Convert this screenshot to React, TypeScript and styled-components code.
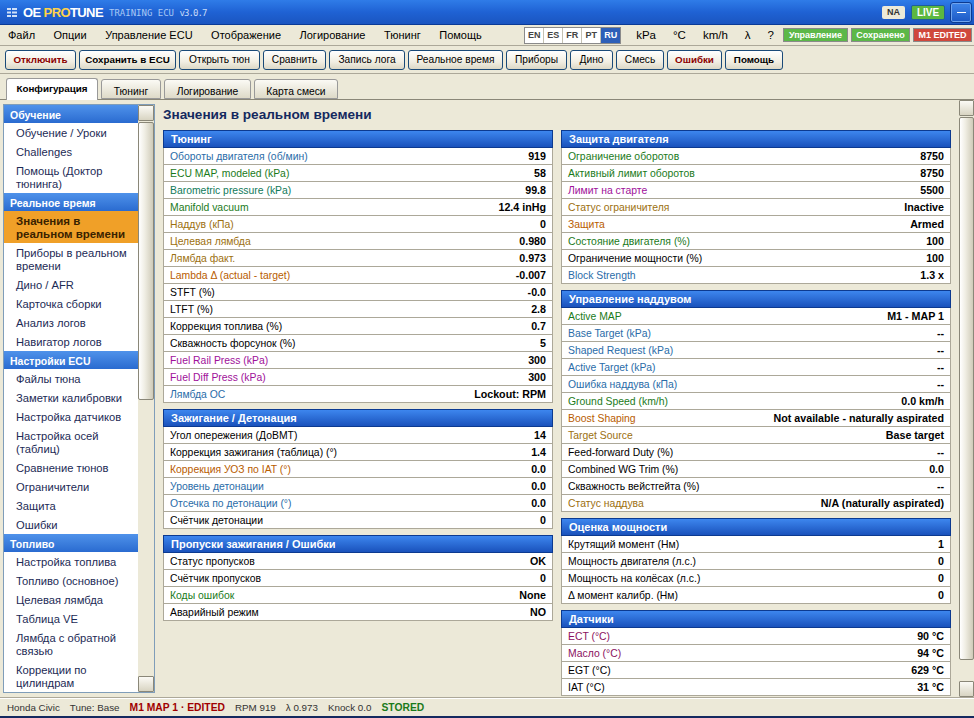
import React from "react";
import styled, { createGlobalStyle } from "styled-components";

const UI = `"Liberation Sans", Arial, sans-serif`;

const GlobalStyle = createGlobalStyle`
  html, body { margin: 0; padding: 0; height: 100%; overflow: hidden; }
  body { background: #ece9d8; font-family: "Liberation Sans", Arial, sans-serif; color: #000; }
  #root { height: 100%; }
  * { box-sizing: border-box; }
`;

const Shell = styled.div`
  width: 974px;
  height: 718px;
  display: flex;
  flex-direction: column;
  background: #ece9d8;
  overflow: hidden;
`;

const TitleBar = styled.div`
  height: 25px;
  flex: none;
  display: flex;
  align-items: center;
  padding: 0 2px 0 7px;
  background: linear-gradient(180deg, #2f7ce8 0%, #1f62d4 50%, #1a55c0 100%);
  border-bottom: 1px solid #0a3a96;
`;

const Brand = styled.div`
  font: bold 13px ${UI};
  letter-spacing: -0.6px;
  color: #fff;
  margin-left: 6px;
  span { color: #ffd24a; }
`;

const Sub = styled.div`
  font: 9px "DejaVu Sans Mono", monospace;
  color: #a8c8f4;
  margin-left: 6px;
  padding-top: 2px;
  white-space: pre;
`;

const Version = styled.span`
  letter-spacing: -0.9px;
  color: #c8dcf8;
`;

const Spacer = styled.div`
  flex: 1;
`;

const NaPill = styled.div`
  width: 23px;
  height: 13px;
  border-radius: 2px;
  background: #ece9d8;
  color: #333;
  font: bold 9px ${UI};
  display: flex;
  align-items: center;
  justify-content: center;
  margin-right: 6px;
`;

const LivePill = styled.div`
  width: 34px;
  height: 15px;
  border-radius: 2px;
  background: #5cb840;
  border: 1px solid #1f5f9a;
  color: #fff;
  font: bold 10px ${UI};
  display: flex;
  align-items: center;
  justify-content: center;
  margin-right: 5px;
`;

const MinBtn = styled.div`
  width: 22px;
  height: 21px;
  border-radius: 3px;
  background: linear-gradient(180deg, #3f86ea, #1c58c4);
  border: 1px solid #0c3a90;
  box-shadow: inset 0 0 0 1px #6fa4ee;
  display: flex;
  align-items: center;
  justify-content: center;
  &::after { content: ""; width: 9px; height: 1px; background: #fff; }
`;

const MenuBar = styled.div`
  height: 21px;
  flex: none;
  display: flex;
  align-items: center;
  gap: 18.5px;
  padding: 0 2px 0 8px;
  border-bottom: 1px solid #aca899;
`;

const MenuItem = styled.div`
  font: 11px ${UI};
  color: #000;
  white-space: nowrap;
`;

const MenuRight = styled.div`
  margin-left: auto;
  display: flex;
  align-items: center;
`;

const LangGroup = styled.div`
  display: flex;
  height: 17px;
  margin-right: 15px;
  border: 1px solid #8a8a8a;
`;

const LangBtn = styled.div<{ $active?: boolean }>`
  width: 19px;
  display: flex;
  align-items: center;
  justify-content: center;
  font: bold 9px ${UI};
  color: ${(p) => (p.$active ? "#fff" : "#444")};
  background: ${(p) => (p.$active ? "#2d5fb8" : "#fff")};
  border-right: 1px solid #c4c1b2;
  &:last-child { border-right: 0; }
`;

const Units = styled.div`
  display: flex;
  gap: 17px;
  margin-right: 9px;
`;

const UnitBtn = styled.div`
  font: 11.5px ${UI};
`;

const Pills = styled.div`
  display: flex;
  gap: 3px;
`;

const StatusPill = styled.div<{ $bg: string; $w: number }>`
  width: ${(p) => p.$w}px;
  height: 14px;
  background: ${(p) => p.$bg};
  border: 1px solid #8a8a8a;
  color: #fff;
  font: bold 9px ${UI};
  display: flex;
  align-items: center;
  justify-content: center;
  white-space: nowrap;
`;

const Toolbar = styled.div`
  height: 28px;
  flex: none;
  display: flex;
  align-items: center;
  gap: 3px;
  padding: 0 5px;
  border-bottom: 1px solid #aca899;
`;

const ToolBtn = styled.div<{ $w: number; $bold?: boolean; $red?: boolean }>`
  width: ${(p) => p.$w}px;
  height: 20px;
  display: flex;
  align-items: center;
  justify-content: center;
  white-space: nowrap;
  border: 1px solid #1a4a78;
  border-radius: 3px;
  background: linear-gradient(180deg, #fff 0%, #f1eee2 60%, #dcd8c6 100%);
  font: ${(p) => (p.$bold ? "bold 9.8px" : "normal 10.2px")} ${UI};
  color: ${(p) => (p.$red ? "#8b0000" : "#000")};
`;

const TabStrip = styled.div`
  height: 26px;
  flex: none;
  display: flex;
  align-items: flex-end;
  gap: 3px;
  padding: 0 6px;
  border-bottom: 1px solid #8a8778;
`;

const Tab = styled.div<{ $w: number; $active?: boolean }>`
  width: ${(p) => p.$w}px;
  height: ${(p) => (p.$active ? 22 : 20)}px;
  margin-bottom: ${(p) => (p.$active ? -1 : 0)}px;
  padding: ${(p) => (p.$active ? "0 0 3px" : "4px 0 0")};
  display: flex;
  align-items: center;
  justify-content: center;
  font: ${(p) => (p.$active ? "bold 9.8px" : "normal 10.3px")} ${UI};
  color: #000;
  border: 1px solid #999;
  border-bottom: ${(p) => (p.$active ? "0" : "1px solid #999")};
  border-radius: 3px 3px 0 0;
  background: ${(p) => (p.$active ? "#fff" : "linear-gradient(180deg,#fbfaf5,#dedac8)")};
`;

const Body = styled.div`
  flex: 1;
  min-height: 0;
  display: flex;
`;

const Side = styled.div`
  width: 152px;
  flex: none;
  margin: 4px 0 4px 3px;
  border: 1px solid #7f9db9;
  background: #fff;
  display: flex;
  overflow: hidden;
`;

const SideList = styled.div`
  flex: 1;
  min-width: 0;
  overflow: hidden;
`;

// fake scrollbars: the headless page hides native ones
const ScrollBar = styled.div<{ $w: number }>`
  width: ${(p) => p.$w}px;
  flex: none;
  display: flex;
  flex-direction: column;
  background: #ece9d8;
`;

const ScrollBtn = styled.div`
  height: 16px;
  flex: none;
  background: linear-gradient(180deg, #fbfaf5, #d8d4c2);
  border: 1px solid #8a8778;
  border-radius: 1px;
`;

const ScrollThumb = styled.div<{ $h: number }>`
  height: ${(p) => p.$h}px;
  flex: none;
  margin-top: 1px;
  background: linear-gradient(90deg, #fff 0%, #f0eee4 40%, #cfcbb8 100%);
  border: 1px solid #8a8778;
  border-radius: 2px;
`;

const SideHead = styled.div`
  height: 18px;
  padding: 1px 0 0 6px;
  display: flex;
  align-items: center;
  font: bold 10.5px ${UI};
  color: #fff;
  background: linear-gradient(180deg, #4f92ea, #2a6bd0);
`;

const SideItem = styled.div<{ $active?: boolean }>`
  padding: 4px 4px 2px 12px;
  font: ${(p) => (p.$active ? "bold 11.5px" : "normal 11.2px")}/13px ${UI};
  color: ${(p) => (p.$active ? "#3a2200" : "#1c2a55")};
  background: ${(p) => (p.$active ? "#f0a028" : "transparent")};
`;

const Main = styled.div`
  flex: 1;
  min-width: 0;
  padding: 6px 8px 0 8px;
  overflow: hidden;
`;

const PageTitle = styled.h1`
  margin: 0 0 6px;
  font: bold 13.6px/18px ${UI};
  color: #14295f;
`;

const Columns = styled.div`
  display: grid;
  grid-template-columns: 390px 390px;
  gap: 8px;
  align-items: start;
`;

const Column = styled.div`
  display: flex;
  flex-direction: column;
  gap: 6px;
`;

const Panel = styled.section`
  border: 1px solid #aca899;
  border-width: 0 1px;
  background: #fff;
`;

const PanelHead = styled.div`
  height: 18px;
  margin: 0 -1px;
  padding-left: 7px;
  display: flex;
  align-items: center;
  font: bold 11px ${UI};
  color: #fff;
  background: linear-gradient(180deg, #3d86ee, #1a52bc);
  border: 1px solid #0c3a90;
`;

const Row = styled.div`
  height: 17px;
  padding: 0 6px 0 6px;
  display: flex;
  align-items: center;
  justify-content: space-between;
  border-bottom: 1px solid #aca899;
`;

const Label = styled.span<{ $c?: string }>`
  font: 10.4px ${UI};
  color: ${(p) => p.$c || "#000"};
`;

const Val = styled.span`
  font: bold 10.7px ${UI};
  color: #000;
`;

const StatusBar = styled.div`
  height: 21px;
  flex: none;
  display: flex;
  align-items: center;
  gap: 10px;
  padding-left: 7px;
  border-top: 1px solid #aca899;
  border-bottom: 2px solid #14295f;
  box-shadow: inset 0 1px 0 #fff;
`;

const StatusText = styled.span<{ $c?: string; $bold?: boolean }>`
  font: ${(p) => (p.$bold ? "bold 10.3px" : "normal 9.8px")} ${UI};
  color: ${(p) => p.$c || "#333"};
`;

const BLUE = "#2a6ca8";
const GREEN = "#1a7a1a";
const TEAL = "#117a5a";
const BROWN = "#9c7010";
const ORANGE = "#b85c00";
const PURPLE = "#a0109a";
const MAROON = "#8b1060";

type R = [string, string, string?];
const panelsL: { t: string; rows: R[] }[] = [
  {
    t: "Тюнинг",
    rows: [
      ["Обороты двигателя (об/мин)", "919", BLUE],
      ["ECU MAP, modeled (kPa)", "58", GREEN],
      ["Barometric pressure (kPa)", "99.8", TEAL],
      ["Manifold vacuum", "12.4 inHg", GREEN],
      ["Наддув (кПа)", "0", BROWN],
      ["Целевая лямбда", "0.980", BROWN],
      ["Лямбда факт.", "0.973", BROWN],
      ["Lambda Δ (actual - target)", "-0.007", ORANGE],
      ["STFT (%)", "-0.0"],
      ["LTFT (%)", "2.8"],
      ["Коррекция топлива (%)", "0.7"],
      ["Скважность форсунок (%)", "5"],
      ["Fuel Rail Press (kPa)", "300", PURPLE],
      ["Fuel Diff Press (kPa)", "300", PURPLE],
      ["Лямбда ОС", "Lockout: RPM", BLUE],
    ],
  },
  {
    t: "Зажигание / Детонация",
    rows: [
      ["Угол опережения (ДоВМТ)", "14"],
      ["Коррекция зажигания (таблица) (°)", "1.4"],
      ["Коррекция УОЗ по IAT (°)", "0.0", ORANGE],
      ["Уровень детонации", "0.0", BLUE],
      ["Отсечка по детонации (°)", "0.0", BLUE],
      ["Счётчик детонации", "0"],
    ],
  },
  {
    t: "Пропуски зажигания / Ошибки",
    rows: [
      ["Статус пропусков", "OK"],
      ["Счётчик пропусков", "0"],
      ["Коды ошибок", "None", GREEN],
      ["Аварийный режим", "NO"],
    ],
  },
];

const panelsR: { t: string; rows: R[] }[] = [
  {
    t: "Защита двигателя",
    rows: [
      ["Ограничение оборотов", "8750", GREEN],
      ["Активный лимит оборотов", "8750", GREEN],
      ["Лимит на старте", "5500", PURPLE],
      ["Статус ограничителя", "Inactive", BROWN],
      ["Защита", "Armed", ORANGE],
      ["Состояние двигателя (%)", "100", GREEN],
      ["Ограничение мощности (%)", "100"],
      ["Block Strength", "1.3 x", BLUE],
    ],
  },
  {
    t: "Управление наддувом",
    rows: [
      ["Active MAP", "M1 - MAP 1", GREEN],
      ["Base Target (kPa)", "--", BLUE],
      ["Shaped Request (kPa)", "--", BLUE],
      ["Active Target (kPa)", "--", BLUE],
      ["Ошибка наддува (кПа)", "--", BLUE],
      ["Ground Speed (km/h)", "0.0 km/h", GREEN],
      ["Boost Shaping", "Not available - naturally aspirated", ORANGE],
      ["Target Source", "Base target", BROWN],
      ["Feed-forward Duty (%)", "--"],
      ["Combined WG Trim (%)", "0.0"],
      ["Скважность вейстгейта (%)", "--"],
      ["Статус наддува", "N/A (naturally aspirated)", BROWN],
    ],
  },
  {
    t: "Оценка мощности",
    rows: [
      ["Крутящий момент (Нм)", "1"],
      ["Мощность двигателя (л.с.)", "0"],
      ["Мощность на колёсах (л.с.)", "0"],
      ["Δ момент калибр. (Нм)", "0"],
    ],
  },
  {
    t: "Датчики",
    rows: [
      ["ECT (°C)", "90 °C", MAROON],
      ["Масло (°C)", "94 °C", MAROON],
      ["EGT (°C)", "629 °C"],
      ["IAT (°C)", "31 °C"],
    ],
  },
];

const side: { h: string; items: (string | [string])[] }[] = [
  { h: "Обучение", items: ["Обучение / Уроки", "Challenges", "Помощь (Доктор тюнинга)"] },
  {
    h: "Реальное время",
    items: [["Значения в реальном времени"], "Приборы в реальном времени", "Дино / AFR", "Карточка сборки", "Анализ логов", "Навигатор логов"],
  },
  {
    h: "Настройки ECU",
    items: ["Файлы тюна", "Заметки калибровки", "Настройка датчиков", "Настройка осей (таблиц)", "Сравнение тюнов", "Ограничители", "Защита", "Ошибки"],
  },
  {
    h: "Топливо",
    items: ["Настройка топлива", "Топливо (основное)", "Целевая лямбда", "Таблица VE", "Лямбда с обратной связью", "Коррекции по цилиндрам"],
  },
];

const PanelView: React.FC<{ t: string; rows: R[] }> = ({ t, rows }) => (
  <Panel>
    <PanelHead>{t}</PanelHead>
    {rows.map((r) => (
      <Row key={r[0]}>
        <Label $c={r[2]}>{r[0]}</Label>
        <Val>{r[1]}</Val>
      </Row>
    ))}
  </Panel>
);

const App: React.FC = () => (
  <Shell>
    <GlobalStyle />
    <TitleBar>
      <svg width="10" height="9" viewBox="0 0 10 9" fill="#cfe0f8">
        <rect x="0" y="0" width="4" height="2" />
        <rect x="5" y="0" width="5" height="2" />
        <rect x="0" y="3.5" width="4" height="2" />
        <rect x="5" y="3.5" width="5" height="2" />
        <rect x="0" y="7" width="4" height="2" />
        <rect x="5" y="7" width="5" height="2" />
      </svg>
      <Brand>
        OE <span>PRO</span>TUNE
      </Brand>
      <Sub>
        TRAINING ECU <Version>v3.0.7</Version>
      </Sub>
      <Spacer />
      <NaPill>NA</NaPill>
      <LivePill>LIVE</LivePill>
      <MinBtn />
    </TitleBar>
    <MenuBar>
      {["Файл", "Опции", "Управление ECU", "Отображение", "Логирование", "Тюнинг", "Помощь"].map((m) => (
        <MenuItem key={m}>{m}</MenuItem>
      ))}
      <MenuRight>
        <LangGroup>
          {["EN", "ES", "FR", "PT"].map((l) => (
            <LangBtn key={l}>{l}</LangBtn>
          ))}
          <LangBtn $active>RU</LangBtn>
        </LangGroup>
        <Units>
          <UnitBtn>kPa</UnitBtn>
          <UnitBtn>°C</UnitBtn>
          <UnitBtn>km/h</UnitBtn>
          <UnitBtn>λ</UnitBtn>
          <UnitBtn>?</UnitBtn>
        </Units>
        <Pills>
          <StatusPill $bg="#5cb848" $w={65}>Управление</StatusPill>
          <StatusPill $bg="#5cb848" $w={59}>Сохранено</StatusPill>
          <StatusPill $bg="#d0483c" $w={59}>M1 EDITED</StatusPill>
        </Pills>
      </MenuRight>
    </MenuBar>
    <Toolbar>
      <ToolBtn $w={71} $bold $red>Отключить</ToolBtn>
      <ToolBtn $w={97} $bold>Сохранить в ECU</ToolBtn>
      <ToolBtn $w={81}>Открыть тюн</ToolBtn>
      <ToolBtn $w={63}>Сравнить</ToolBtn>
      <ToolBtn $w={76}>Запись лога</ToolBtn>
      <ToolBtn $w={95}>Реальное время</ToolBtn>
      <ToolBtn $w={61}>Приборы</ToolBtn>
      <ToolBtn $w={43}>Дино</ToolBtn>
      <ToolBtn $w={48}>Смесь</ToolBtn>
      <ToolBtn $w={55} $bold $red>Ошибки</ToolBtn>
      <ToolBtn $w={58} $bold>Помощь</ToolBtn>
    </Toolbar>
    <TabStrip>
      <Tab $w={92} $active>Конфигурация</Tab>
      <Tab $w={60}>Тюнинг</Tab>
      <Tab $w={87}>Логирование</Tab>
      <Tab $w={84}>Карта смеси</Tab>
    </TabStrip>
    <Body>
      <Side>
        <SideList>
          {side.map((g) => (
            <React.Fragment key={g.h}>
              <SideHead>{g.h}</SideHead>
              {g.items.map((i) =>
                typeof i === "string" ? (
                  <SideItem key={i}>{i}</SideItem>
                ) : (
                  <SideItem key={i[0]} $active>
                    {i[0]}
                  </SideItem>
                ),
              )}
            </React.Fragment>
          ))}
        </SideList>
        <ScrollBar $w={16}>
          <ScrollBtn />
          <ScrollThumb $h={278} />
          <Spacer />
          <ScrollBtn />
        </ScrollBar>
      </Side>
      <Main>
        <PageTitle>Значения в реальном времени</PageTitle>
        <Columns>
          <Column>
            {panelsL.map((p) => (
              <PanelView key={p.t} {...p} />
            ))}
          </Column>
          <Column>
            {panelsR.map((p) => (
              <PanelView key={p.t} {...p} />
            ))}
          </Column>
        </Columns>
      </Main>
      <ScrollBar $w={15}>
        <ScrollBtn />
        <ScrollThumb $h={543} />
        <Spacer />
        <ScrollBtn />
      </ScrollBar>
    </Body>
    <StatusBar>
      <StatusText>Honda Civic</StatusText>
      <StatusText>Tune: Base</StatusText>
      <StatusText $bold $c="#a00000">M1 MAP 1 · EDITED</StatusText>
      <StatusText>RPM 919</StatusText>
      <StatusText>λ 0.973</StatusText>
      <StatusText>Knock 0.0</StatusText>
      <StatusText $bold $c="#1a7a1a">STORED</StatusText>
    </StatusBar>
  </Shell>
);

export default App;
